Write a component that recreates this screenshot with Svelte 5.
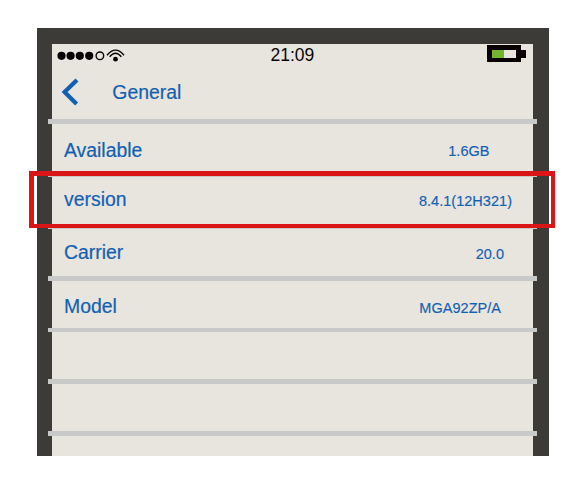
<script>
  const rows = [
    { label: 'Available', value: '1.6GB', top: 15, valueTop: 18, right: 43.5, height: 48, line: 5 },
    { label: 'version', value: '8.4.1(12H321)', top: 11, valueTop: 15, right: 21, height: 47, line: 5 },
    { label: 'Carrier', value: '20.0', top: 12, valueTop: 16, right: 29, height: 47, line: 5 },
    { label: 'Model', value: 'MGA92ZP/A', top: 14, valueTop: 18, right: 32, height: 47, line: 4 },
    { height: 47, line: 5 },
    { height: 47, line: 5 }
  ];
</script>

<main>
  <div class="phone">
    <div class="screen">
      <div class="status">
        <svg class="signal" width="74" height="16" viewBox="0 0 74 16">
          <g fill="#080404">
            <circle cx="9.5" cy="11.8" r="4.1" />
            <circle cx="18.6" cy="11.8" r="4.1" />
            <circle cx="27.8" cy="11.8" r="4.1" />
            <circle cx="37.2" cy="11.8" r="4.1" />
            <circle cx="63.5" cy="15.2" r="2.4" />
          </g>
          <g fill="none" stroke="#080404" stroke-width="1.4">
            <circle cx="47.9" cy="11.8" r="3.8" />
            <path d="M55 11.3Q63.5 0.9 72 11.3" />
            <path d="M57.6 12.8Q63.5 5.6 69.4 12.8" />
          </g>
        </svg>
        <time>21:09</time>
        <div class="battery"><div class="case"><i></i></div><b></b></div>
      </div>
      <header>
        <svg width="20" height="28" viewBox="0 0 20 28">
          <path d="M17 2.1L4.6 14.1L16.6 26.1" fill="none" stroke="#1261b0" stroke-width="4.2" />
        </svg>
        <h1>General</h1>
      </header>
      <div class="line" style:height="5px"></div>
      {#each rows as row}
        <div class="row" style:height="{row.height}px">
          {#if row.label}
            <span class="label" style:padding-top="{row.top}px">{row.label}</span>
            <span class="value" style:padding-top="{row.valueTop}px" style:padding-right="{row.right}px">{row.value}</span>
          {/if}
        </div>
        <div class="line" style:height="{row.line}px"></div>
      {/each}
    </div>
  </div>
  <div class="highlight"></div>
</main>

<style>
  :global(body) { margin: 0; background: #fff; }
  main {
    position: relative;
    box-sizing: border-box;
    width: 567px;
    height: 484px;
    padding: 28px 18px 28px 37px;
    background: #fff;
    font-family: "Liberation Sans", Arial, sans-serif;
    color: #1261b0;
  }
  .phone {
    box-sizing: border-box;
    width: 512px;
    height: 428px;
    padding: 16px 16px 0 15px;
    background: #3c3b38;
  }
  .screen { height: 412px; background: #e8e4de; }
  .status {
    display: flex;
    height: 28px;
    align-items: flex-start;
    color: #080404;
  }
  .signal { overflow: visible; flex: none; }
  time {
    width: 80px;
    margin-left: 144.5px;
    font-size: 17.5px;
    line-height: 22px;
  }
  .battery { display: flex; align-items: center; height: 17px; margin: 1px 7px 0 auto; }
  .case {
    box-sizing: border-box;
    width: 34px;
    height: 17px;
    border: solid #080000;
    border-width: 5px 5px 4px;
    background: #e8e4de;
  }
  .case i { display: block; width: 12px; height: 8px; background: #73b42d; }
  .battery b { width: 5px; height: 8px; background: #080000; }
  header { display: flex; height: 47px; }
  header svg { margin: 6px 0 0 8px; flex: none; }
  h1 {
    margin: 8px 0 0 32.3px;
    font-size: 19.4px;
    font-weight: 400;
    line-height: 24px;
    -webkit-text-stroke: .2px currentColor;
  }
  .line { margin: 0 -4px; background: #c8cac9; }
  .row {
    box-sizing: border-box;
    display: flex;
    justify-content: space-between;
    align-items: flex-start;
    padding-left: 12px;
  }
  .label {
    font-size: 19.4px;
    line-height: 22px;
    -webkit-text-stroke: .2px currentColor;
  }
  .value {
    font-size: 14.5px;
    letter-spacing: .03px;
    line-height: 18px;
    -webkit-text-stroke: .15px currentColor;
  }
  .highlight {
    position: absolute;
    left: 29px;
    top: 171px;
    box-sizing: border-box;
    width: 526px;
    height: 57px;
    border: solid #d91518;
    border-width: 5px 4px 4px 5px;
  }
</style>
